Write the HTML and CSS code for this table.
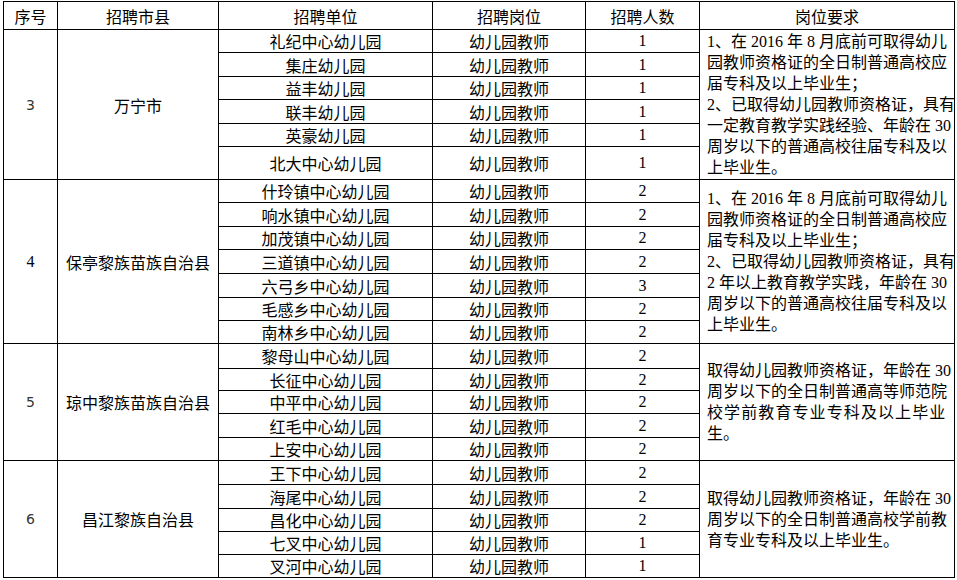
FILE: index.html
```html
<!DOCTYPE html>
<html lang="zh">
<head>
<meta charset="utf-8">
<title>招聘岗位表</title>
<link rel="stylesheet" href="styles.css">
</head>
<body>
<table class="jobs">
  <colgroup>
    <col class="c-no">
    <col class="c-county">
    <col class="c-unit">
    <col class="c-post">
    <col class="c-count">
    <col class="c-req">
  </colgroup>
  <thead>
    <tr class="h28">
      <th>序号</th>
      <th>招聘市县</th>
      <th>招聘单位</th>
      <th>招聘岗位</th>
      <th>招聘人数</th>
      <th>岗位要求</th>
    </tr>
  </thead>
  <tbody>
    <tr class="h23">
      <td rowspan="6" class="no">3</td>
      <td rowspan="6">万宁市</td>
      <td>礼纪中心幼儿园</td><td>幼儿园教师</td><td class="num">1</td>
      <td rowspan="6" class="req">1、在 2016 年 8 月底前可取得幼儿<br>园教师资格证的全日制普通高校应<br>届专科及以上毕业生；<br>2、已取得幼儿园教师资格证，具有<br>一定教育教学实践经验、年龄在 30<br>周岁以下的普通高校往届专科及以<br>上毕业生。</td>
    </tr>
    <tr class="h24"><td>集庄幼儿园</td><td>幼儿园教师</td><td class="num">1</td></tr>
    <tr class="h23"><td>益丰幼儿园</td><td>幼儿园教师</td><td class="num">1</td></tr>
    <tr class="h24"><td>联丰幼儿园</td><td>幼儿园教师</td><td class="num">1</td></tr>
    <tr class="h23"><td>英豪幼儿园</td><td>幼儿园教师</td><td class="num">1</td></tr>
    <tr class="h33"><td>北大中心幼儿园</td><td>幼儿园教师</td><td class="num">1</td></tr>

    <tr class="h23">
      <td rowspan="7" class="no-serif">4</td>
      <td rowspan="7">保亭黎族苗族自治县</td>
      <td>什玲镇中心幼儿园</td><td>幼儿园教师</td><td class="num">2</td>
      <td rowspan="7" class="req">1、在 2016 年 8 月底前可取得幼儿<br>园教师资格证的全日制普通高校应<br>届专科及以上毕业生；<br>2、已取得幼儿园教师资格证，具有<br>2 年以上教育教学实践，年龄在 30<br>周岁以下的普通高校往届专科及以<br>上毕业生。</td>
    </tr>
    <tr class="h24"><td>响水镇中心幼儿园</td><td>幼儿园教师</td><td class="num">2</td></tr>
    <tr class="h23"><td>加茂镇中心幼儿园</td><td>幼儿园教师</td><td class="num">2</td></tr>
    <tr class="h24"><td>三道镇中心幼儿园</td><td>幼儿园教师</td><td class="num">2</td></tr>
    <tr class="h24"><td>六弓乡中心幼儿园</td><td>幼儿园教师</td><td class="num">3</td></tr>
    <tr class="h23"><td>毛感乡中心幼儿园</td><td>幼儿园教师</td><td class="num">2</td></tr>
    <tr class="h23"><td>南林乡中心幼儿园</td><td>幼儿园教师</td><td class="num">2</td></tr>

    <tr class="h25">
      <td rowspan="5" class="no">5</td>
      <td rowspan="5">琼中黎族苗族自治县</td>
      <td>黎母山中心幼儿园</td><td>幼儿园教师</td><td class="num">2</td>
      <td rowspan="5" class="req">取得幼儿园教师资格证，年龄在 30<br>周岁以下的全日制普通高等师范院<br><span class="spread">校学前教育专业专科及以上毕业</span><br>生。</td>
    </tr>
    <tr class="h22"><td>长征中心幼儿园</td><td>幼儿园教师</td><td class="num">2</td></tr>
    <tr class="h23"><td>中平中心幼儿园</td><td>幼儿园教师</td><td class="num">2</td></tr>
    <tr class="h24"><td>红毛中心幼儿园</td><td>幼儿园教师</td><td class="num">2</td></tr>
    <tr class="h23"><td>上安中心幼儿园</td><td>幼儿园教师</td><td class="num">2</td></tr>

    <tr class="h24">
      <td rowspan="5" class="no">6</td>
      <td rowspan="5">昌江黎族自治县</td>
      <td>王下中心幼儿园</td><td>幼儿园教师</td><td class="num">2</td>
      <td rowspan="5" class="req">取得幼儿园教师资格证，年龄在 30<br>周岁以下的全日制普通高校学前教<br>育专业专科及以上毕业生。</td>
    </tr>
    <tr class="h24"><td>海尾中心幼儿园</td><td>幼儿园教师</td><td class="num">2</td></tr>
    <tr class="h23"><td>昌化中心幼儿园</td><td>幼儿园教师</td><td class="num">2</td></tr>
    <tr class="h23"><td>七叉中心幼儿园</td><td>幼儿园教师</td><td class="num">1</td></tr>
    <tr class="h23"><td>叉河中心幼儿园</td><td>幼儿园教师</td><td class="num">1</td></tr>
  </tbody>
</table>
</body>
</html>
```

FILE: styles.css
```css
html, body {
  margin: 0;
  padding: 0;
  background: #ffffff;
}

body {
  padding: 1px 0 0 3px;
}

.jobs {
  border-collapse: collapse;
  table-layout: fixed;
  width: 951px;
  font-family: "Noto Sans CJK SC", "Noto Sans", sans-serif;
  font-size: 16px;
  font-weight: 400;
  color: #000;
}

.c-no { width: 54px; }
.c-county { width: 161px; }
.c-unit { width: 214px; }
.c-post { width: 153px; }
.c-count { width: 114px; }
.c-req { width: 255px; }

.jobs th,
.jobs td {
  border: 1px solid #000;
  padding: 0;
  text-align: center;
  vertical-align: middle;
  font-weight: 400;
  line-height: 20px;
  white-space: nowrap;
  overflow: hidden;
}

.jobs .no {
  font-family: "DejaVu Sans", sans-serif;
  font-size: 14px;
  color: #333;
}

.jobs .no-serif {
  font-family: "Liberation Serif", serif;
  font-size: 16px;
}

.jobs .num {
  font-family: "Liberation Serif", "Noto Sans CJK SC", serif;
}

.jobs .req {
  text-align: left;
  padding: 0 4px 0 7px;
  line-height: 21px;
  font-family: "Liberation Serif", "Noto Sans CJK SC", serif;
}

.spread {
  letter-spacing: 1.1px;
}

.h22 { height: 22px; }
.h23 { height: 23px; }
.h24 { height: 24px; }
.h25 { height: 25px; }
.h28 { height: 28px; }
.h33 { height: 33px; }
```
